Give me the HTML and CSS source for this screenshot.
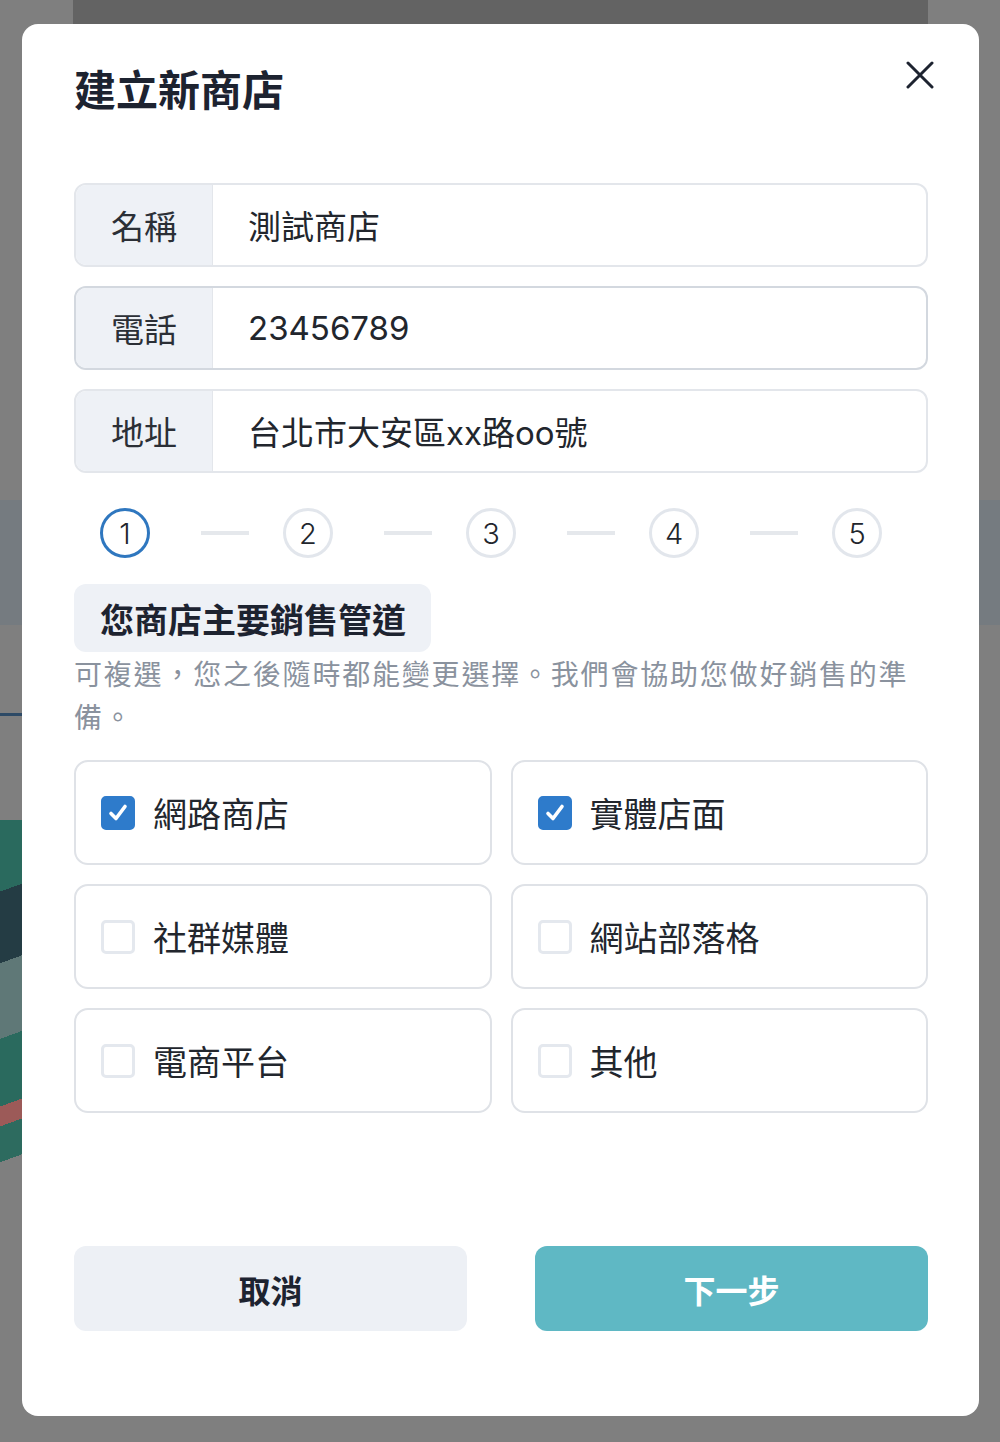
FILE: index.html
```html
<!DOCTYPE html>
<html lang="zh-Hant">
<head>
<meta charset="utf-8">
<title>建立新商店</title>
<link rel="stylesheet" href="styles.css">
</head>
<body>
<div class="modal">
  <h1 class="title">建立新商店</h1>
  <button class="close" aria-label="關閉">
    <svg width="28" height="28" viewBox="0 0 28 28"><path d="M2 2L26 26M26 2L2 26" stroke="#1d2330" stroke-width="3" stroke-linecap="round" fill="none"/></svg>
  </button>

  <div class="fields">
    <div class="field"><div class="field-label">名稱</div><div class="field-value">測試商店</div></div>
    <div class="field field-focus"><div class="field-label">電話</div><div class="field-value">23456789</div></div>
    <div class="field"><div class="field-label">地址</div><div class="field-value">台北市大安區xx路oo號</div></div>
  </div>

  <div class="steps">
    <div class="step step-active">1</div>
    <div class="step-line"></div>
    <div class="step">2</div>
    <div class="step-line"></div>
    <div class="step">3</div>
    <div class="step-line"></div>
    <div class="step">4</div>
    <div class="step-line"></div>
    <div class="step">5</div>
  </div>

  <div class="chip">您商店主要銷售管道</div>
  <p class="desc">可複選，您之後隨時都能變更選擇。我們會協助您做好銷售的準備。</p>

  <div class="options">
    <label class="option"><span class="box box-checked"><svg width="24" height="24" viewBox="0 0 24 24"><path d="M5 12.5L10 17.5L19 5.5" stroke="#fff" stroke-width="3.6" fill="none" stroke-linecap="round" stroke-linejoin="round"/></svg></span><span>網路商店</span></label>
    <label class="option"><span class="box box-checked"><svg width="24" height="24" viewBox="0 0 24 24"><path d="M5 12.5L10 17.5L19 5.5" stroke="#fff" stroke-width="3.6" fill="none" stroke-linecap="round" stroke-linejoin="round"/></svg></span><span>實體店面</span></label>
    <label class="option"><span class="box"></span><span>社群媒體</span></label>
    <label class="option"><span class="box"></span><span>網站部落格</span></label>
    <label class="option"><span class="box"></span><span>電商平台</span></label>
    <label class="option"><span class="box"></span><span>其他</span></label>
  </div>

  <div class="actions">
    <button class="btn btn-cancel">取消</button>
    <button class="btn btn-next">下一步</button>
  </div>
</div>
</body>
</html>
```
FILE: styles.css
```css
* { box-sizing: border-box; }
html, body { margin: 0; padding: 0; }
body {
  width: 1000px;
  height: 1442px;
  overflow: hidden;
  font-family: Inter, "Noto Sans CJK TC", sans-serif;
  background:
    linear-gradient(#636363, #636363) 73px 0 / 855px 24px no-repeat,
    linear-gradient(#2d4a66, #2d4a66) 0 713px / 22px 3px no-repeat,
    linear-gradient(160deg, #2a6a5e 0 18%, #243c44 18% 36%, #5f7877 36% 55%, #2a6a5e 55% 72%, #9c5a58 72% 77%, #2d6b5f 77% 86%, #7f7f7f 86% 100%) 0 820px / 22px 390px no-repeat,
    linear-gradient(#757b80, #757b80) 0 500px / 100% 125px no-repeat,
    #7f7f7f;
  padding-top: 24px;
}

.modal {
  position: relative;
  margin-left: 22px;
  width: 957px;
  height: 1392px;
  background: #fff;
  border-radius: 16px;
  padding: 38px 51px 0 52px;
  display: flex;
  flex-direction: column;
}

.title {
  margin: 0;
  font-size: 42px;
  line-height: 58px;
  font-weight: 700;
  color: #1d2330;
}

.close {
  position: absolute;
  top: 37px;
  left: 884px;
  width: 28px;
  height: 28px;
  padding: 0;
  border: 0;
  background: none;
}
.close svg { display: block; }

.fields {
  margin-top: 63px;
  display: flex;
  flex-direction: column;
  gap: 19px;
}
.field {
  display: flex;
  height: 84px;
  border: 2px solid #e3e6eb;
  border-radius: 12px;
  overflow: hidden;
}
.field-focus { border-color: #d3d8df; }
.field-label {
  width: 137px;
  flex: none;
  background: #eef1f6;
  border-right: 1px solid #e3e6eb;
  display: flex;
  align-items: center;
  justify-content: center;
  font-size: 33px;
  color: #2b2f36;
}
.field-value {
  flex: 1;
  display: flex;
  align-items: center;
  padding-left: 35px;
  font-size: 33px;
  color: #22262d;
}

.steps {
  margin-top: 35px;
  height: 50px;
  display: flex;
  align-items: center;
  padding-left: 26px;
}
.step {
  width: 50px;
  height: 50px;
  flex: none;
  border-radius: 50%;
  border: 3px solid #e2e6ec;
  display: flex;
  align-items: center;
  justify-content: center;
  font-size: 29px;
  font-weight: 300;
  color: #22262d;
}
.step-active { border-color: #2f77bf; }
.step-line {
  width: 48px;
  height: 4px;
  flex: none;
  background: #e5e8ec;
  margin: 0 34px 0 51px;
}

.chip {
  margin-top: 26px;
  align-self: flex-start;
  height: 68px;
  padding: 0 25px 0 26px;
  background: #eef1f6;
  border-radius: 12px;
  display: flex;
  align-items: center;
  font-size: 34px;
  font-weight: 700;
  color: #1d2330;
}

.desc {
  margin: 2px 0 0;
  font-size: 28px;
  letter-spacing: 1.8px;
  line-height: 43px;
  color: #8a929e;
}

.options {
  margin-top: 20px;
  display: grid;
  grid-template-columns: 1fr 1fr;
  gap: 19px;
}
.option {
  height: 105px;
  border: 2px solid #dfe2e7;
  border-radius: 14px;
  display: flex;
  align-items: center;
  gap: 18px;
  padding-left: 25px;
  font-size: 34px;
  color: #22262d;
}
.box {
  width: 34px;
  height: 34px;
  flex: none;
  border-radius: 5px;
  border: 3px solid #e4e8ee;
  background: #fff;
  display: flex;
  align-items: center;
  justify-content: center;
}
.box-checked {
  background: #2e7bcb;
  border-color: #2e7bcb;
}
.box svg { display: block; }

.actions {
  margin-top: 133px;
  display: flex;
  justify-content: space-between;
}
.btn {
  width: 393px;
  height: 85px;
  border: 0;
  border-radius: 12px;
  font-family: Inter, "Noto Sans CJK TC", sans-serif;
  font-size: 32px;
  font-weight: 700;
}
.btn-cancel { background: #edf0f5; color: #1d2330; }
.btn-next { background: #5fb8c4; color: #fff; }
```
